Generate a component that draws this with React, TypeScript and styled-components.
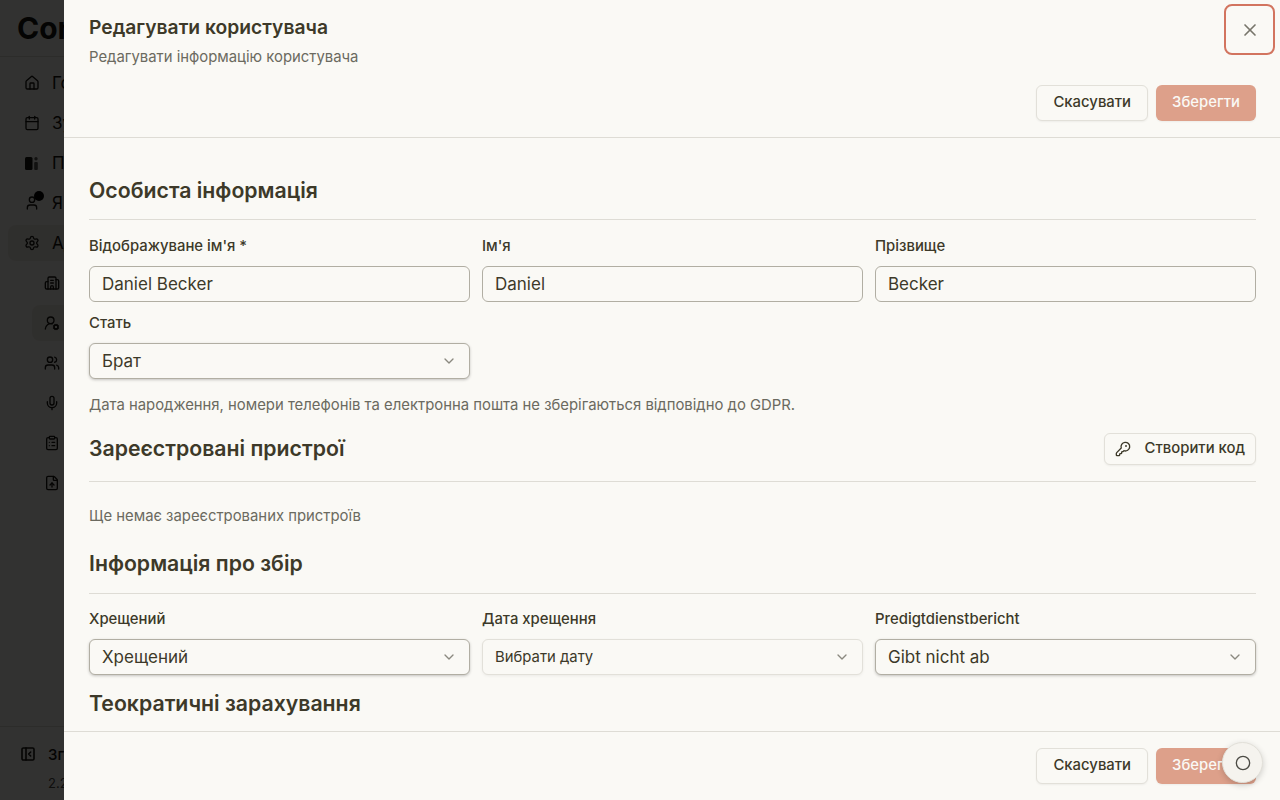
import React from "react";
import styled, { createGlobalStyle } from "styled-components";
import {
  House, Calendar, User, Settings, Building2, UserRoundCog, Users, Mic,
  ClipboardList, FileUp, PanelLeftClose, X, ChevronDown, Circle, KeyRound,
} from "lucide-react";

const Global = createGlobalStyle`
  html, body { margin: 0; padding: 0; height: 100%; overflow: hidden; }
  body { font-family: Inter, "Noto Sans", sans-serif; background: #faf9f5; color: #3d3929; }
  * { box-sizing: border-box; }
`;

const Page = styled.div`
  position: relative;
  width: 1280px;
  height: 800px;
  overflow: hidden;
  background: #faf9f5;
`;

const Sidebar = styled.aside`
  width: 256px;
  height: 800px;
  display: flex;
  flex-direction: column;
  color: #17150f;
`;

const Brand = styled.div`
  height: 57px;
  padding: 8px 16px 0 17px;
  font-size: 30px;
  font-weight: 700;
  line-height: 40px;
  border-bottom: 1px solid #ddd9d0;
`;

const Nav = styled.nav`
  flex: 1;
  display: flex;
  flex-direction: column;
  padding: 8px 8px 0;
`;

const NavItem = styled.div<{ $active?: boolean; $sub?: boolean }>`
  position: relative;
  height: 36px;
  margin-bottom: 4px;
  margin-left: ${(p) => (p.$sub ? "24px" : "0")};
  display: flex;
  align-items: center;
  gap: 12px;
  padding-left: ${(p) => (p.$sub ? "12px" : "16px")};
  border-radius: 8px;
  font-size: 17px;
  background: ${(p) => (p.$active ? "#ece9e1" : "transparent")};
  svg { flex: none; }
`;

const Dot = styled.span`
  position: absolute;
  left: 26px;
  top: 6px;
  width: 10px;
  height: 10px;
  border-radius: 50%;
  background: #000;
`;

const SideFoot = styled.div`
  height: 74px;
  border-top: 1px solid #ddd9d0;
  padding: 18px 0 0 20px;
`;

const Collapse = styled.div`
  display: flex;
  align-items: center;
  gap: 12px;
  height: 18px;
  font-size: 15px;
  font-weight: 500;
`;

const Version = styled.div`
  margin: 12px 0 0 28px;
  font-size: 13px;
  line-height: 16px;
  color: #4a4a44;
`;

const Overlay = styled.div`
  position: absolute;
  inset: 0;
  background: rgba(0, 0, 0, 0.8);
`;

const Sheet = styled.div`
  position: absolute;
  left: 64px;
  top: 0;
  right: 0;
  bottom: 0;
  display: flex;
  flex-direction: column;
  background: #faf9f5;
`;

const Header = styled.header`
  height: 138px;
  flex: none;
  padding: 16px 24px 0 25px;
  border-bottom: 1px solid #dedcd5;
`;

const Title = styled.h2`
  margin: 0;
  font-size: 19.25px;
  line-height: 22px;
  font-weight: 560;
  color: #3d3929;
`;

const Subtitle = styled.p`
  margin: 9px 0 0;
  font-size: 14.875px;
  line-height: 20px;
  color: #6b6a60;
`;

const Actions = styled.div`
  display: flex;
  justify-content: flex-end;
  gap: 8px;
  margin-top: 18px;
`;

const FootActions = styled(Actions)`
  margin-top: 0;
`;

const Button = styled.button<{ $primary?: boolean }>`
  height: 36px;
  padding: 0 16px 3px;
  font-family: inherit;
  font-size: 14.875px;
  font-weight: 460;
  border-radius: 6px;
  border: ${(p) => (p.$primary ? "0" : "1px solid #e2e0d9")};
  background: ${(p) => (p.$primary ? "#dda08a" : "#faf9f5")};
  color: ${(p) => (p.$primary ? "#faf9f5" : "#3d3929")};
  box-shadow: 0 1px 2px rgba(0, 0, 0, 0.05);
`;

const CloseButton = styled.button`
  position: absolute;
  top: 4px;
  right: 5px;
  width: 51px;
  height: 51px;
  display: flex;
  align-items: center;
  justify-content: center;
  padding: 0;
  background: transparent;
  color: #77756b;
  border: 2px solid #d2745f;
  border-radius: 8px;
`;

const Content = styled.main`
  flex: 1;
  min-height: 0;
  overflow: hidden;
  padding: 36px 24px 0 25px;
`;

const SectionHead = styled.div<{ $gap: number; $top?: number }>`
  display: flex;
  justify-content: space-between;
  align-items: center;
  height: 32px;
  margin-top: ${(p) => p.$top ?? 0}px;
  margin-bottom: ${(p) => p.$gap}px;
`;

const SectionTitle = styled.h3<{ $raised?: boolean }>`
  margin: 0 0 ${(p) => (p.$raised ? "2px" : "0")};
  font-size: 21.25px;
  line-height: 32px;
  font-weight: 560;
  color: #3d3929;
`;

const Rule = styled.hr`
  margin: 0;
  border: 0;
  border-top: 1px solid #dedcd5;
`;

const Grid = styled.div<{ $top: number }>`
  display: grid;
  grid-template-columns: repeat(3, 381px);
  column-gap: 12px;
  margin-top: ${(p) => p.$top}px;
`;

const Field = styled.div`
  display: flex;
  flex-direction: column;
`;

const Label = styled.label`
  height: 21px;
  margin-bottom: 10px;
  font-size: 14.875px;
  line-height: 23px;
  font-weight: 460;
  color: #3d3929;
`;

const Input = styled.div`
  height: 36px;
  display: flex;
  align-items: center;
  padding: 0 12px;
  font-size: 17px;
  color: #3d3929;
  background: #faf9f5;
  border: 1px solid #b1aea3;
  border-radius: 6px;
`;

const Select = styled.div<{ $muted?: boolean }>`
  height: 36px;
  display: flex;
  align-items: center;
  justify-content: space-between;
  padding: 0 12px;
  font-size: ${(p) => (p.$muted ? "14.875px" : "17px")};
  color: #3d3929;
  background: #faf9f5;
  border: 1px solid ${(p) => (p.$muted ? "#e2e0d9" : "#b1aea3")};
  border-radius: 6px;
  box-shadow: 0 1px 3px rgba(0, 0, 0, ${(p) => (p.$muted ? "0.06" : "0.22")});
  svg { color: #8b897f; }
`;

const Note = styled.p<{ $top: number }>`
  margin: ${(p) => p.$top}px 0 0;
  font-size: 14.875px;
  line-height: 20px;
  color: #6b6a60;
`;

const CodeButton = styled.button`
  height: 32px;
  width: 152px;
  display: flex;
  align-items: center;
  justify-content: space-between;
  padding: 0 10px 3px 10px;
  font-family: inherit;
  font-size: 14.875px;
  font-weight: 460;
  color: #3d3929;
  background: #faf9f5;
  border: 1px solid #e2e0d9;
  border-radius: 6px;
  box-shadow: 0 1px 2px rgba(0, 0, 0, 0.05);
  svg { margin-top: 3px; }
`;

const Footer = styled.footer`
  height: 69px;
  flex: none;
  padding-top: 16px;
  padding-right: 24px;
  border-top: 1px solid #dedcd5;
`;

const Fab = styled.button`
  position: absolute;
  right: 17px;
  bottom: 17px;
  width: 41px;
  height: 41px;
  display: flex;
  align-items: center;
  justify-content: center;
  padding: 0;
  border: 1px solid #e2e0d9;
  border-radius: 50%;
  background: #f5f3ee;
  color: #4c4b45;
  box-shadow: 0 2px 6px rgba(0, 0, 0, 0.18);
`;

const BookIcon = () => (
  <svg width="16" height="16" viewBox="0 0 16 16" fill="currentColor">
    <rect x="1" y="2" width="7.5" height="13" rx="1.5" />
    <circle cx="12" cy="3.8" r="1.7" opacity="0.7" />
    <rect x="10.2" y="7" width="3.6" height="8" rx="1" opacity="0.7" />
  </svg>
);

export default function App() {
  const save = "Зберегти";
  const cancel = "Скасувати";
  return (
    <Page>
      <Global />
      <Sidebar>
        <Brand>Congregation</Brand>
        <Nav>
          <NavItem><House size={16} />Головна</NavItem>
          <NavItem><Calendar size={16} />Зустрічі</NavItem>
          <NavItem><BookIcon />Публікації</NavItem>
          <NavItem><User size={16} /><Dot />Я</NavItem>
          <NavItem $active><Settings size={16} />Адміністрування</NavItem>
          <NavItem $sub><Building2 size={16} />Збір</NavItem>
          <NavItem $sub $active><UserRoundCog size={16} />Користувачі</NavItem>
          <NavItem $sub><Users size={16} />Групи</NavItem>
          <NavItem $sub><Mic size={16} />Промови</NavItem>
          <NavItem $sub><ClipboardList size={16} />Звіти</NavItem>
          <NavItem $sub><FileUp size={16} />Імпорт</NavItem>
        </Nav>
        <SideFoot>
          <Collapse><PanelLeftClose size={16} strokeWidth={2.4} />Згорнути</Collapse>
          <Version>2.2.0</Version>
        </SideFoot>
      </Sidebar>
      <Overlay />
      <Sheet>
        <Header>
          <Title>Редагувати користувача</Title>
          <Subtitle>Редагувати інформацію користувача</Subtitle>
          <Actions>
            <Button>{cancel}</Button>
            <Button $primary>{save}</Button>
          </Actions>
        </Header>
        <CloseButton aria-label="Закрити"><X size={20} /></CloseButton>
        <Content>
          <SectionHead $gap={13}><SectionTitle>Особиста інформація</SectionTitle></SectionHead>
          <Rule />
          <Grid $top={15}>
            <Field><Label>Відображуване ім'я *</Label><Input>Daniel Becker</Input></Field>
            <Field><Label>Ім'я</Label><Input>Daniel</Input></Field>
            <Field><Label>Прізвище</Label><Input>Becker</Input></Field>
          </Grid>
          <Grid $top={10}>
            <Field>
              <Label>Стать</Label>
              <Select>Брат<ChevronDown size={16} /></Select>
            </Field>
          </Grid>
          <Note $top={16}>Дата народження, номери телефонів та електронна пошта не зберігаються відповідно до GDPR.</Note>
          <SectionHead $top={18} $gap={16}>
            <SectionTitle $raised>Зареєстровані пристрої</SectionTitle>
            <CodeButton><KeyRound size={16} />Створити код</CodeButton>
          </SectionHead>
          <Rule />
          <Note $top={24}>Ще немає зареєстрованих пристроїв</Note>
          <SectionHead $top={21} $gap={14}><SectionTitle>Інформація про збір</SectionTitle></SectionHead>
          <Rule />
          <Grid $top={14}>
            <Field><Label>Хрещений</Label><Select>Хрещений<ChevronDown size={16} /></Select></Field>
            <Field><Label>Дата хрещення</Label><Select $muted>Вибрати дату<ChevronDown size={16} /></Select></Field>
            <Field><Label>Predigtdienstbericht</Label><Select>Gibt nicht ab<ChevronDown size={16} /></Select></Field>
          </Grid>
          <SectionHead $top={12} $gap={13}><SectionTitle>Теократичні зарахування</SectionTitle></SectionHead>
        </Content>
        <Footer>
          <FootActions>
            <Button>{cancel}</Button>
            <Button $primary>{save}</Button>
          </FootActions>
        </Footer>
        <Fab aria-label="Стан"><Circle size={16} /></Fab>
      </Sheet>
    </Page>
  );
}
